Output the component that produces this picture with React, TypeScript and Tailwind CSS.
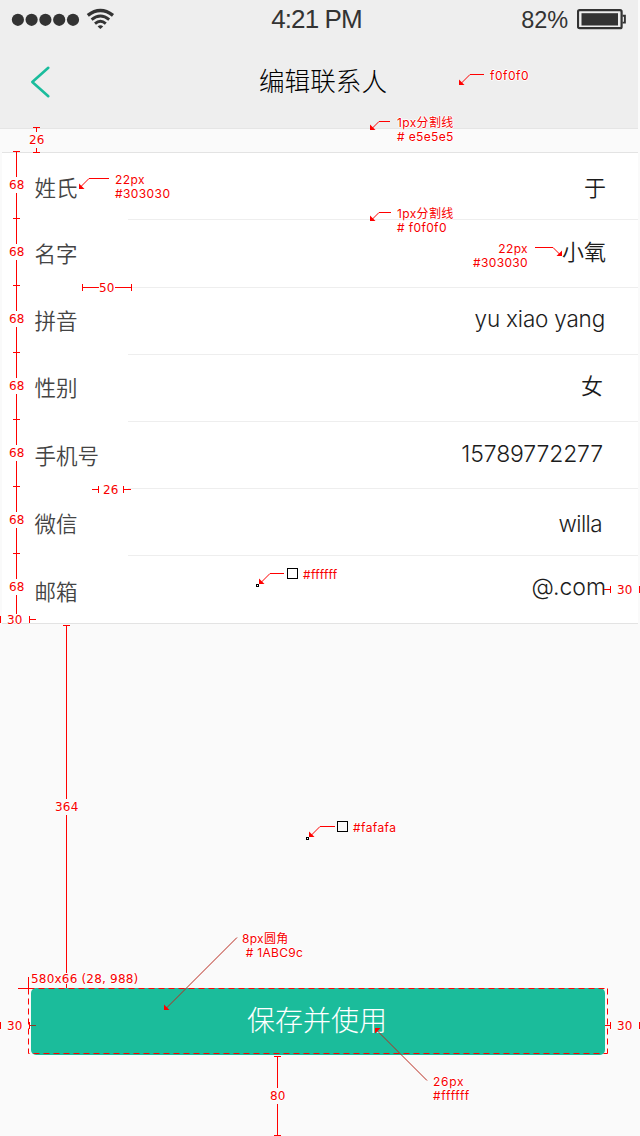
import React from "react";

const CJK = "font-['Noto_Sans_CJK_SC',sans-serif]";
const LATIN = "font-[Inter,'Noto_Sans_CJK_SC',sans-serif]";

type Row = { label: string; value: string; height: string; labelCls: string; valueCls: string };

const rows: Row[] = [
  { label: "姓氏", value: "于", height: "h-[67px]", labelCls: "pt-[1px]", valueCls: "pt-[4px] pr-[32px] text-[22px] font-[350]" },
  { label: "名字", value: "小氧", height: "h-[68px]", labelCls: "pb-[2px]", valueCls: "pb-[3px] pr-[32px] text-[22px] font-[350]" },
  { label: "拼音", value: "yu xiao yang", height: "h-[67px]", labelCls: "pb-[3px]", valueCls: "pb-[4px] pr-[33px] text-[22.5px] tracking-[-0.2px] font-light" },
  { label: "性别", value: "女", height: "h-[67px]", labelCls: "pb-[3px]", valueCls: "pb-[4px] pr-[35px] text-[22px] font-[350]" },
  { label: "手机号", value: "15789772277", height: "h-[67px]", labelCls: "pb-[1px]", valueCls: "pb-[2px] pr-[35px] text-[23px] tracking-[-0.15px] font-light" },
  { label: "微信", value: "willa", height: "h-[67px]", labelCls: "pt-[1px]", valueCls: "pt-[3px] pr-[36px] text-[22.5px] tracking-[-0.6px] font-light" },
  { label: "邮箱", value: "@.com", height: "h-[67px]", labelCls: "pt-[3px]", valueCls: "pb-[5px] pr-[32px] text-[23px] font-light" },
];

function StatusBar() {
  return (
    <div className="grid h-[39px] grid-cols-[1fr_auto_1fr] items-center text-[#333333] font-['Liberation_Sans',sans-serif]">
      <svg className="ml-[11px]" width="104" height="24" viewBox="11 8 104 24" fill="#333333">
        {[17.9, 31.6, 45.4, 59.2, 73].map((cx) => (
          <circle key={cx} cx={cx} cy="19.8" r="6.1" />
        ))}
        <g fill="none" stroke="#333333">
          <path d="M87.8 15.4 Q100.4 5.8 113 15.4" strokeWidth="3.4" />
          <path d="M91.6 19.6 Q100.4 12.4 109.2 19.6" strokeWidth="2.9" />
          <path d="M95 23.6 Q100.4 18.8 105.8 23.6" strokeWidth="2.8" />
        </g>
        <path d="M97.6 26.4 Q100.4 24.2 103.2 26.4 L100.4 29Z" />
      </svg>
      <span className="pb-[2px] pr-[5px] text-[26px] leading-[36px] tracking-[-0.9px]">4:21 PM</span>
      <div className="flex items-center justify-end gap-[9px] pr-[11px]">
        <span className="text-[23.5px] leading-[36px] tracking-[-0.1px]">82%</span>
        <svg width="50" height="21" viewBox="0 0 50 21">
          <rect x="1" y="1.2" width="43.6" height="18" rx="1.5" fill="none" stroke="#333333" strokeWidth="2.2" />
          <rect x="4.5" y="4.2" width="36.5" height="12.3" fill="#333333" />
          <path d="M45.5 6.8h2.4v6.8h-2.4" fill="none" stroke="#333333" strokeWidth="1.9" />
        </svg>
      </div>
    </div>
  );
}

const head = (x: number, y: number) => `M${x} ${y - 5.5}V${y}H${x + 5.5}Z`;

function Guides() {
  const ticks = [151, 218, 285, 352, 419, 486, 553];
  return (
    <svg className="absolute inset-0" width="640" height="1136" fill="none" stroke="#ff0000" strokeWidth="1">
      {ticks.map((t, i) => (
        <path key={t} d={`M13 ${t + 0.5}h7M16.5 ${t}V${t + 26}M16.5 ${t + 42}V${i === 6 ? 614 : t + 67}`} />
      ))}
      <path d="M33 127.5h7M36.5 127v5M36.5 148v4M33 152.5h7" />
      <path d="M82.5 284v7M82 287.5h17M115 287.5h17M131.5 284v7" />
      <path d="M92 489.5h6M98.5 486v7M123.5 486v7M124 489.5h7" />
      <path d="M0.5 616v7M29.5 616v7M30 619.5h6" />
      <path d="M604 589.5h7M610.5 586v7M639.5 586v7" />
      <path d="M63 625.5h7M66.5 625V799M66.5 815V988" />
      <path d="M0.5 1022v7M29.5 1022v7M605 1025.5h6M610.5 1022v7M639.5 1022v7" />
      <path d="M30 1025.5h6" stroke="#8b3a26" />
      <path d="M274 1056.5h7M277.5 1056v32M277.5 1104v31M274 1135.5h7" />
      <path d="M28.5 977v11M18 988.5h13" />
      <path d="M28.5 988.5H607.5M607.5 988.5V1053.5" strokeDasharray="6 4" />
      <path d="M28.5 988.5V1053.5H607.5" strokeDasharray="6 4" />

      <path d="M484 74.5H470L461 83.5M390 121.5H379L371 129.5M109 178.5H89L80 187.5M391 212.5H379L371 220.5M535 247.5H553L561 255.5M284 573.5H270L260 583.5M335 826.5H320L310 836.5" />
      <path d="M237 937.5L165 1009.5M427 1080.5L376 1029.5" stroke="#b92b20" />
      <g fill="#ff0000" stroke="none">
        <path d={head(459, 85)} />
        <path d={head(370, 130)} />
        <path d={head(79, 189)} />
        <path d={head(370, 221)} />
        <path d={head(259, 584)} />
        <path d={head(309, 837)} />
        <path d={head(164, 1010)} />
        <path d="M562 250.5V256H556.5ZM375 1033.5V1028H380.5Z" />
      </g>
      <g stroke="#000000">
        <rect x="287.5" y="568.5" width="10" height="10" />
        <rect x="256.5" y="584.5" width="2" height="2" />
        <rect x="337.5" y="821.5" width="10" height="10" />
        <rect x="306.5" y="837.5" width="2" height="2" />
      </g>
    </svg>
  );
}

const halo = "[text-shadow:1px_0_#fff,-1px_0_#fff,0_1px_#fff,0_-1px_#fff]";

function Measure({ at, children }: { at: string; children: React.ReactNode }) {
  return (
    <span className={`absolute whitespace-pre text-[12px] leading-[14px] tracking-[0.2px] font-['DejaVu_Sans',sans-serif] ${halo} ${at}`}>
      {children}
    </span>
  );
}

function Note({ at, children }: { at: string; children: React.ReactNode }) {
  return (
    <div className={`absolute whitespace-pre text-[12px] leading-[14px] ${LATIN} ${halo} ${at}`}>{children}</div>
  );
}

function Annotations() {
  return (
    <div className="pointer-events-none absolute inset-0 overflow-hidden text-[#f80000]">
      <Guides />
      <Measure at="left-[29px] top-[133px]">26</Measure>
      <Measure at="left-[9px] top-[178px]">68</Measure>
      <Measure at="left-[9px] top-[245px]">68</Measure>
      <Measure at="left-[9px] top-[312px]">68</Measure>
      <Measure at="left-[9px] top-[379px]">68</Measure>
      <Measure at="left-[9px] top-[446px]">68</Measure>
      <Measure at="left-[9px] top-[513px]">68</Measure>
      <Measure at="left-[9px] top-[580px]">68</Measure>
      <Measure at="left-[99px] top-[281px]">50</Measure>
      <Measure at="left-[103px] top-[483px]">26</Measure>
      <Measure at="left-[7px] top-[613px]">30</Measure>
      <Measure at="left-[617px] top-[583px]">30</Measure>
      <Measure at="left-[55px] top-[800px]">364</Measure>
      <Measure at="left-[31px] top-[972px]">580x66 (28, 988)</Measure>
      <Measure at="left-[7px] top-[1019px]">30</Measure>
      <Measure at="left-[617px] top-[1019px]">30</Measure>
      <Measure at="left-[270px] top-[1089px]">80</Measure>

      <Note at="left-[490px] top-[69px] tracking-[0.5px]">f0f0f0</Note>
      <Note at="left-[397px] top-[116px] tracking-[0.35px]">{"1px分割线\n# e5e5e5"}</Note>
      <Note at="left-[115px] top-[173px] tracking-[0.4px]">{"22px\n#303030"}</Note>
      <Note at="left-[397px] top-[207px] tracking-[0.35px]">{"1px分割线\n# f0f0f0"}</Note>
      <Note at="right-[112px] top-[242px] text-right tracking-[0.35px]">{"22px\n#303030"}</Note>
      <Note at="left-[303px] top-[568px] tracking-[0.4px]">#ffffff</Note>
      <Note at="left-[353px] top-[821px] tracking-[0.4px]">#fafafa</Note>
      <Note at="left-[242px] top-[932px] tracking-[0.3px]">{"8px圆角\n # 1ABC9c"}</Note>
      <Note at="left-[433px] top-[1075px] tracking-[0.7px]">{"26px\n#ffffff"}</Note>
    </div>
  );
}

export default function App() {
  return (
    <main className={`relative flex h-[1136px] w-[640px] flex-col overflow-hidden bg-[#fafafa] ${CJK}`}>
      <header className="mr-[2px] h-[129px] border-b border-[#e5e5e5] bg-[#eeeeee]">
        <StatusBar />
        <div className="grid h-[88px] grid-cols-[1fr_auto_1fr] items-center">
          <svg className="mb-[2px] ml-[30px]" width="22" height="34" viewBox="0 0 22 34" fill="none" stroke="#1abc9c" strokeWidth="2.6" strokeLinecap="round" strokeLinejoin="round">
            <path d="M18.3 2.8L2.3 17L18.3 31.2" />
          </svg>
          <h1 className="pb-[6px] pl-[8px] text-[25.6px] font-light leading-[36px] text-black">编辑联系人</h1>
        </div>
      </header>

      <section className="ml-[2px] mr-[2px] mt-[23px] border-y border-[#e3e3e3] bg-white">
        {rows.map((row, i) => (
          <div key={row.label} className={`flex ${row.height}`}>
            <div className={`flex w-[126px] shrink-0 items-center pl-[32.5px] text-[21.5px] font-[350] text-[#444444] ${row.labelCls}`}>
              {row.label}
            </div>
            <div
              className={`flex flex-1 items-center justify-end border-[#eeeeee] text-[#1c1c1c] ${LATIN} ${row.valueCls} ${i < rows.length - 1 ? "border-b" : ""}`}
            >
              {row.value}
            </div>
          </div>
        ))}
      </section>

      <button className="ml-[31px] mt-[364px] flex h-[67px] w-[574px] items-center justify-center rounded-[5px] bg-[#1bbc9b] pb-[6px] pr-[2px] text-[28px] font-light text-white">
        保存并使用
      </button>

      <Annotations />
    </main>
  );
}
